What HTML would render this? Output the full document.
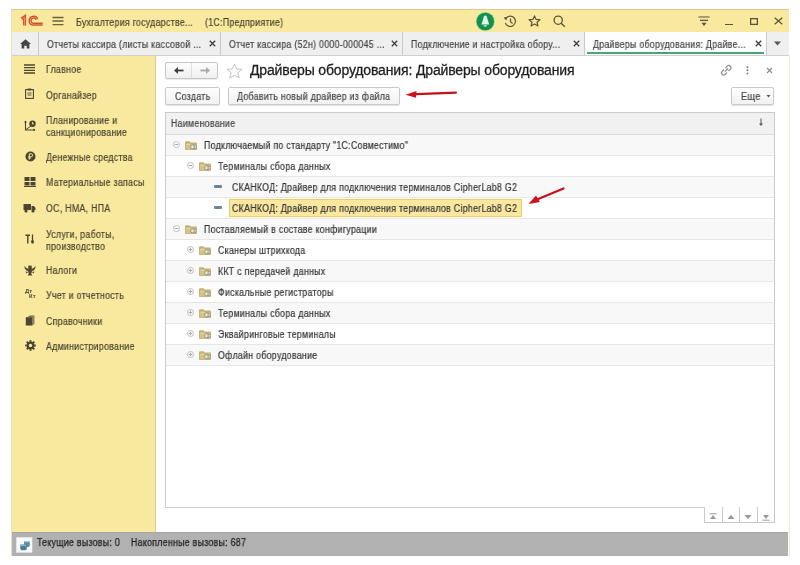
<!DOCTYPE html>
<html><head><meta charset="utf-8">
<style>
*{box-sizing:border-box;margin:0;padding:0}
html,body{width:800px;height:565px;overflow:hidden;background:#fff;font-family:"Liberation Sans",sans-serif;color:#333;position:relative}
.r{position:absolute}
.t{position:absolute;white-space:nowrap;will-change:transform;-webkit-text-stroke:0.2px currentColor}
</style></head><body>
<div class="r" style="left:11px;top:9px;width:778px;height:547px;background:#fff"></div>
<div class="r" style="left:11px;top:9px;width:778px;height:1.5px;background:#d4cb9b"></div>
<div class="r" style="left:11px;top:10px;width:778px;height:22px;background:#f9e99e"></div>
<svg class="r" style="left:18px;top:13px" width="28" height="16" viewBox="0 0 28 16"><g fill="none" stroke-linecap="butt"><path d="M3.6 5.9 L6.6 3.9 V12.6" stroke="#cf5529" stroke-width="3.1"/><path d="M4.4 5.7 L6.6 4.4 V12.3" stroke="#f2a47e" stroke-width="0.8"/><path d="M19.7 6.2 A4.4 4.4 0 1 0 15.6 12.1 H24.6" stroke="#cf5529" stroke-width="1.5"/><path d="M18.1 6.8 A2.6 2.6 0 1 0 15.6 10.3 H24.6" stroke="#cf5529" stroke-width="1.4"/></g></svg>
<svg class="r" style="left:52px;top:16px" width="12" height="10" viewBox="0 0 12 10"><path d="M0.5 1.5H11.5M0.5 5H11.5M0.5 8.6H11.5" stroke="#6a643c" stroke-width="1.3"/></svg>
<div class="t" style="left:76px;top:17.14px;font-size:10px;line-height:12px;letter-spacing:0.32px;color:#4a4530;transform:scaleX(0.88);transform-origin:0 0;">Бухгалтерия государстве...</div>
<div class="t" style="left:205px;top:17.14px;font-size:10px;line-height:12px;letter-spacing:0.32px;color:#4a4530;transform:scaleX(0.88);transform-origin:0 0;">(1С:Предприятие)</div>
<svg class="r" style="left:475px;top:10.5px" width="21" height="21" viewBox="0 0 21 21"><circle cx="10.3" cy="10.5" r="9.4" fill="#7ed79a"/><circle cx="10.3" cy="10.5" r="8.7" fill="#178f4a"/><path d="M10.3 4.6 C9.2 4.6 8.6 5.6 8.3 7.5 L6.4 13.4 H14.2 L12.3 7.5 C12 5.6 11.4 4.6 10.3 4.6Z" fill="#dcfbe8"/><rect x="8.7" y="14.3" width="3.2" height="1.1" fill="#dcfbe8"/></svg>
<svg class="r" style="left:503px;top:15px" width="14" height="13" viewBox="0 0 14 13"><g fill="none" stroke="#5a5436" stroke-width="1.2"><path d="M3 3.2 A5.2 5.2 0 1 1 2.3 8"/><path d="M7.5 3.5V6.8L9.6 8.4"/></g><path d="M0.6 2.4 L4.4 2 L3.3 5.6Z" fill="#5a5436"/></svg>
<svg class="r" style="left:528px;top:15px" width="13" height="12" viewBox="0 0 13 12"><path d="M6.5 0.9 L8.1 4.4 L11.9 4.7 L9 7.2 L9.9 11 L6.5 9 L3.1 11 L4 7.2 L1.1 4.7 L4.9 4.4Z" fill="none" stroke="#5a5436" stroke-width="1.2" stroke-linejoin="round"/></svg>
<svg class="r" style="left:553px;top:15px" width="13" height="13" viewBox="0 0 13 13"><g fill="none" stroke="#5a5436" stroke-width="1.3"><circle cx="5.2" cy="5.2" r="4.1"/><path d="M8.2 8.2 L11.8 11.8"/></g></svg>
<svg class="r" style="left:698px;top:16px" width="12" height="11" viewBox="0 0 12 11"><path d="M0.5 1H11.5M2 4.3H10" stroke="#5a5436" stroke-width="1.2"/><path d="M3.5 6.8H8.5L6 10Z" fill="#5a5436"/></svg>
<div class="r" style="left:725px;top:24px;width:8px;height:1.3px;background:#5a5436"></div>
<svg class="r" style="left:750px;top:18px" width="8" height="7" viewBox="0 0 8 7"><rect x="0.65" y="0.65" width="6.7" height="5.7" fill="none" stroke="#5a5436" stroke-width="1.3"/></svg>
<svg class="r" style="left:774px;top:17px" width="9" height="8" viewBox="0 0 9 8"><path d="M0.7 0.7L8.3 7.3M8.3 0.7L0.7 7.3" stroke="#5a5436" stroke-width="1.2"/></svg>
<div class="r" style="left:11px;top:32px;width:778px;height:23px;background:#efefef"></div>
<div class="r" style="left:11px;top:55px;width:778px;height:1px;background:#d0d0d0"></div>
<svg class="r" style="left:19.5px;top:38.5px" width="11" height="10" viewBox="0 0 11 10"><path d="M5.5 0.3 L11 5 H9.4 V9.6 H6.7 V6.8 H4.3 V9.6 H1.6 V5 H0Z" fill="#454545"/></svg>
<div class="r" style="left:38px;top:32px;width:1px;height:23px;background:#c9c9c9"></div>
<div class="t" style="left:47px;top:39.34px;font-size:10px;line-height:12px;letter-spacing:0.32px;color:#444;transform:scaleX(0.88);transform-origin:0 0;">Отчеты кассира (листы кассовой ...</div>
<svg class="r" style="left:209px;top:40px" width="7" height="7" viewBox="0 0 7 7"><path d="M0.8 0.8L6.2 6.2M6.2 0.8L0.8 6.2" stroke="#3a3a3a" stroke-width="1.25"/></svg>
<div class="r" style="left:220px;top:32px;width:1px;height:23px;background:#c9c9c9"></div>
<div class="t" style="left:229px;top:39.34px;font-size:10px;line-height:12px;letter-spacing:0.32px;color:#444;transform:scaleX(0.88);transform-origin:0 0;">Отчет кассира (52н) 0000-000045 ...</div>
<svg class="r" style="left:391px;top:40px" width="7" height="7" viewBox="0 0 7 7"><path d="M0.8 0.8L6.2 6.2M6.2 0.8L0.8 6.2" stroke="#3a3a3a" stroke-width="1.25"/></svg>
<div class="r" style="left:402px;top:32px;width:1px;height:23px;background:#c9c9c9"></div>
<div class="t" style="left:411px;top:39.34px;font-size:10px;line-height:12px;letter-spacing:0.32px;color:#444;transform:scaleX(0.88);transform-origin:0 0;">Подключение и настройка обору...</div>
<svg class="r" style="left:573px;top:40px" width="7" height="7" viewBox="0 0 7 7"><path d="M0.8 0.8L6.2 6.2M6.2 0.8L0.8 6.2" stroke="#3a3a3a" stroke-width="1.25"/></svg>
<div class="r" style="left:585px;top:32px;width:181px;height:23px;background:#fdfdfd"></div>
<div class="r" style="left:587px;top:52px;width:177px;height:2px;background:#4ba377"></div>
<div class="r" style="left:584px;top:32px;width:1px;height:23px;background:#c9c9c9"></div>
<div class="t" style="left:593px;top:39.34px;font-size:10px;line-height:12px;letter-spacing:0.32px;color:#444;transform:scaleX(0.88);transform-origin:0 0;">Драйверы оборудования: Драйве...</div>
<svg class="r" style="left:755px;top:40px" width="7" height="7" viewBox="0 0 7 7"><path d="M0.8 0.8L6.2 6.2M6.2 0.8L0.8 6.2" stroke="#3a3a3a" stroke-width="1.25"/></svg>
<div class="r" style="left:766px;top:32px;width:1px;height:23px;background:#c9c9c9"></div>
<svg class="r" style="left:774px;top:41px" width="7" height="5" viewBox="0 0 7 5"><path d="M0 0.5H7L3.5 4.5Z" fill="#555"/></svg>
<div class="r" style="left:11px;top:56px;width:144px;height:476px;background:#f9e99e"></div>
<div class="r" style="left:155px;top:56px;width:1px;height:476px;background:#d8cf9f"></div>
<div class="t" style="left:45.5px;top:64.13px;font-size:10px;line-height:12px;letter-spacing:0.32px;color:#48442f;transform:scaleX(0.88);transform-origin:0 0;">Главное</div>
<div class="t" style="left:45.5px;top:89.63px;font-size:10px;line-height:12px;letter-spacing:0.32px;color:#48442f;transform:scaleX(0.88);transform-origin:0 0;">Органайзер</div>
<div class="t" style="left:45.5px;top:114.63px;font-size:10px;line-height:12px;letter-spacing:0.32px;color:#48442f;transform:scaleX(0.88);transform-origin:0 0;">Планирование и</div>
<div class="t" style="left:45.5px;top:126.63px;font-size:10px;line-height:12px;letter-spacing:0.32px;color:#48442f;transform:scaleX(0.88);transform-origin:0 0;">санкционирование</div>
<div class="t" style="left:45.5px;top:152.13px;font-size:10px;line-height:12px;letter-spacing:0.32px;color:#48442f;transform:scaleX(0.88);transform-origin:0 0;">Денежные средства</div>
<div class="t" style="left:45.5px;top:177.44px;font-size:10px;line-height:12px;letter-spacing:0.32px;color:#48442f;transform:scaleX(0.88);transform-origin:0 0;">Материальные запасы</div>
<div class="t" style="left:45.5px;top:202.94px;font-size:10px;line-height:12px;letter-spacing:0.32px;color:#48442f;transform:scaleX(0.88);transform-origin:0 0;">ОС, НМА, НПА</div>
<div class="t" style="left:45.5px;top:228.63px;font-size:10px;line-height:12px;letter-spacing:0.32px;color:#48442f;transform:scaleX(0.88);transform-origin:0 0;">Услуги, работы,</div>
<div class="t" style="left:45.5px;top:240.63px;font-size:10px;line-height:12px;letter-spacing:0.32px;color:#48442f;transform:scaleX(0.88);transform-origin:0 0;">производство</div>
<div class="t" style="left:45.5px;top:265.14px;font-size:10px;line-height:12px;letter-spacing:0.32px;color:#48442f;transform:scaleX(0.88);transform-origin:0 0;">Налоги</div>
<div class="t" style="left:45.5px;top:290.14px;font-size:10px;line-height:12px;letter-spacing:0.32px;color:#48442f;transform:scaleX(0.88);transform-origin:0 0;">Учет и отчетность</div>
<div class="t" style="left:45.5px;top:315.64px;font-size:10px;line-height:12px;letter-spacing:0.32px;color:#48442f;transform:scaleX(0.88);transform-origin:0 0;">Справочники</div>
<div class="t" style="left:45.5px;top:341.14px;font-size:10px;line-height:12px;letter-spacing:0.32px;color:#48442f;transform:scaleX(0.88);transform-origin:0 0;">Администрирование</div>
<svg class="r" style="left:24px;top:64px" width="11" height="10" viewBox="0 0 11 10"><path d="M0 1H11M0 3.7H11M0 6.3H11M0 9H11" stroke="#4a4632" stroke-width="1.3"/></svg>
<svg class="r" style="left:25px;top:88px" width="9" height="11" viewBox="0 0 9 11"><rect x="0.6" y="1.6" width="7.8" height="8.8" fill="none" stroke="#4a4632" stroke-width="1.1"/><rect x="2.8" y="0.5" width="3.4" height="2" fill="#4a4632"/><path d="M2.5 5H6.5M2.5 7H6.5" stroke="#4a4632" stroke-width="0.9"/></svg>
<svg class="r" style="left:24px;top:120px" width="12" height="11" viewBox="0 0 12 11"><path d="M1.5 1 V10 H11" fill="none" stroke="#4a4632" stroke-width="1.1"/><path d="M0 2.5 L1.5 0.5 L3 2.5Z M9.5 8.5 L11.5 10 L9.5 11.5Z" fill="#4a4632"/><path d="M2 9.5 L7 6" stroke="#4a4632" stroke-width="1"/><circle cx="8.5" cy="3.8" r="3.2" fill="#4a4632"/><path d="M8.5 2 V4 H10" stroke="#f9e99e" stroke-width="0.9" fill="none"/></svg>
<svg class="r" style="left:25px;top:151px" width="11" height="11" viewBox="0 0 11 11"><circle cx="5.5" cy="5.5" r="5" fill="#4a4632"/><path d="M4.3 8.5 V2.8 H6.2 A1.5 1.5 0 0 1 6.2 5.8 H3.3 M3.3 7.1H6" fill="none" stroke="#f9e99e" stroke-width="1"/></svg>
<svg class="r" style="left:24px;top:177px" width="12" height="10" viewBox="0 0 12 10"><rect x="0.5" y="0" width="5" height="4" fill="#4a4632"/><rect x="6.5" y="0" width="5" height="4" fill="#4a4632"/><rect x="0.5" y="5" width="5" height="3.5" fill="#4a4632"/><rect x="6.5" y="5" width="5" height="3.5" fill="#4a4632"/><rect x="0" y="9" width="12" height="1" fill="#4a4632"/></svg>
<svg class="r" style="left:23px;top:203px" width="13" height="10" viewBox="0 0 13 10"><rect x="0.5" y="1" width="7.5" height="6" fill="#4a4632"/><path d="M8.5 3 H11 L12.5 5 V7 H8.5Z" fill="#4a4632"/><circle cx="3" cy="8" r="1.6" fill="#4a4632"/><circle cx="10" cy="8" r="1.6" fill="#4a4632"/></svg>
<svg class="r" style="left:25px;top:234px" width="10" height="10" viewBox="0 0 10 10"><path d="M0.5 1.2H5 M2.8 1.2V9.5" stroke="#4a4632" stroke-width="1.4"/><path d="M7.5 0.5V6" stroke="#4a4632" stroke-width="1.3"/><ellipse cx="7.5" cy="7.8" rx="1.4" ry="2" fill="#4a4632"/></svg>
<svg class="r" style="left:24px;top:264.5px" width="12" height="11" viewBox="0 0 12 11"><g fill="#4a4632"><path d="M0.5 0.8 C0.3 3.5 1.5 5.8 4.3 6.2 L4.6 3.8 C3 3.8 1.6 2.8 0.5 0.8Z"/><path d="M11.5 0.8 C11.7 3.5 10.5 5.8 7.7 6.2 L7.4 3.8 C9 3.8 10.4 2.8 11.5 0.8Z"/><path d="M4.2 1.3 L5 0.3 L6 1.1 L7 0.3 L7.8 1.3 L7.6 3 H4.4Z"/><path d="M4.2 3 H7.8 L7.9 7 L7.2 8.6 L8.2 10.6 H3.8 L4.8 8.6 L4.1 7Z"/><path d="M1.5 6.5 L4 7 L2.5 8.5Z M10.5 6.5 L8 7 L9.5 8.5Z"/></g></svg>
<div class="t" style="left:25px;top:288.5px;font-size:6px;line-height:5.5px;font-weight:bold;color:#4a4632;-webkit-text-stroke:0">Дт</div><div class="t" style="left:28.5px;top:294px;font-size:6px;line-height:5.5px;font-weight:bold;color:#4a4632;-webkit-text-stroke:0">Кт</div>
<svg class="r" style="left:25px;top:315px" width="10" height="11" viewBox="0 0 10 11"><path d="M2.5 2.2 L4.5 0.5 H9.5 L7.5 2.2Z" fill="#4a4632" opacity="0.75"/><rect x="0.8" y="2.2" width="6.7" height="8.3" fill="#4a4632"/><path d="M7.5 2.2 L9.5 0.5 V8.8 L7.5 10.5Z" fill="#4a4632" opacity="0.6"/></svg>
<svg class="r" style="left:24.5px;top:339.5px" width="11" height="11" viewBox="0 0 11 11"><g fill="#4a4632"><circle cx="5.5" cy="5.5" r="3.7"/><rect x="4.5" y="0.2" width="2" height="10.6" transform="rotate(0 5.5 5.5)"/><rect x="4.5" y="0.2" width="2" height="10.6" transform="rotate(45 5.5 5.5)"/><rect x="4.5" y="0.2" width="2" height="10.6" transform="rotate(90 5.5 5.5)"/><rect x="4.5" y="0.2" width="2" height="10.6" transform="rotate(135 5.5 5.5)"/></g><circle cx="5.5" cy="5.5" r="1.7" fill="#f9e99e"/></svg>
<div class="r" style="left:165px;top:62px;width:53px;height:17px;border:1px solid #c6c6c6;border-radius:2px;background:linear-gradient(#fdfdfd,#f0f0f0);box-shadow:0 1px 0 rgba(0,0,0,.08)"></div>
<div class="r" style="left:191px;top:63px;width:1px;height:15px;background:#dedede"></div>
<svg class="r" style="left:174px;top:67px" width="10" height="7" viewBox="0 0 10 7"><path d="M9.5 3.5H2.5" stroke="#404040" stroke-width="1.8"/><path d="M0 3.5 L4 0 V7Z" fill="#404040"/></svg>
<svg class="r" style="left:200px;top:67px" width="10" height="7" viewBox="0 0 10 7"><path d="M0.5 3.5H7.5" stroke="#a9a9a9" stroke-width="1.8"/><path d="M10 3.5 L6 0 V7Z" fill="#a9a9a9"/></svg>
<svg class="r" style="left:226px;top:63px" width="17" height="16" viewBox="0 0 17 16"><path d="M8.5 1 L10.6 6 L16 6.3 L11.9 9.8 L13.2 15 L8.5 12.2 L3.8 15 L5.1 9.8 L1 6.3 L6.4 6Z" fill="none" stroke="#c3c3c3" stroke-width="1" stroke-linejoin="round"/></svg>
<div class="t" style="left:250px;top:61.65px;font-size:14px;line-height:17px;letter-spacing:-0.15px;color:#1f1f1f;-webkit-text-stroke:0.3px #1f1f1f">Драйверы оборудования: Драйверы оборудования</div>
<svg class="r" style="left:720px;top:64px" width="13" height="12" viewBox="0 0 13 12"><g fill="none" stroke="#8a8a8a" stroke-width="1.2"><path d="M5.5 4 L7.3 2.2 A2.1 2.1 0 0 1 10.3 5.2 L8.5 7"/><path d="M7 8.5 L5.2 10.3 A2.1 2.1 0 0 1 2.2 7.3 L4 5.5"/><path d="M4.8 7.7 L8 4.5"/></g></svg>
<svg class="r" style="left:746px;top:66px" width="3" height="9" viewBox="0 0 3 9"><g fill="#7a7a7a"><circle cx="1.5" cy="1.2" r="1"/><circle cx="1.5" cy="4.3" r="1"/><circle cx="1.5" cy="7.4" r="1"/></g></svg>
<svg class="r" style="left:766px;top:67px" width="7" height="7" viewBox="0 0 7 7"><path d="M1 1L6 6M6 1L1 6" stroke="#8a8a8a" stroke-width="1.1"/></svg>
<div class="r" style="left:165px;top:87px;width:55px;height:18px;border:1px solid #c9c9c9;border-radius:2px;background:linear-gradient(#fefefe,#f1f1f1);box-shadow:0 1px 1px rgba(0,0,0,.12)"></div>
<div class="t" style="left:175px;top:91.13px;font-size:10px;line-height:12px;letter-spacing:0.32px;color:#444;transform:scaleX(0.88);transform-origin:0 0;">Создать</div>
<div class="r" style="left:228px;top:87px;width:172px;height:18px;border:1px solid #c9c9c9;border-radius:2px;background:linear-gradient(#fefefe,#f1f1f1);box-shadow:0 1px 1px rgba(0,0,0,.12)"></div>
<div class="t" style="left:237px;top:91.13px;font-size:10px;line-height:12px;letter-spacing:0.32px;color:#444;transform:scaleX(0.88);transform-origin:0 0;">Добавить новый драйвер из файла</div>
<div class="r" style="left:731px;top:87px;width:43px;height:18px;border:1px solid #c9c9c9;border-radius:2px;background:linear-gradient(#fefefe,#f1f1f1);box-shadow:0 1px 1px rgba(0,0,0,.12)"></div>
<div class="t" style="left:740.5px;top:91.13px;font-size:10px;line-height:12px;letter-spacing:0.32px;color:#444;transform:scaleX(0.92);transform-origin:0 0;">Еще</div>
<svg class="r" style="left:765.5px;top:95px" width="5" height="3" viewBox="0 0 5 3"><path d="M0.5 0H4.5L2.5 2.5Z" fill="#555"/></svg>
<svg class="r" style="left:404px;top:88px" width="54" height="12" viewBox="0 0 54 12"><path d="M12 6.2 L52 4.6" stroke="#c2121a" stroke-width="2.2" stroke-linecap="round"/><path d="M1.5 6.8 L12.5 3 L12 9.8Z" fill="#d0101a"/></svg>
<div class="r" style="left:165px;top:112px;width:610px;height:396px;border:1px solid #cbcbcb;background:#fff"></div>
<div class="r" style="left:166px;top:113px;width:608px;height:22px;background:#f1f1f1;border-bottom:1px solid #dadada"></div>
<div class="t" style="left:171px;top:118.13px;font-size:10px;line-height:12px;letter-spacing:0.32px;color:#444;transform:scaleX(0.88);transform-origin:0 0;">Наименование</div>
<svg class="r" style="left:758px;top:118px" width="6" height="9" viewBox="0 0 6 9"><path d="M3 0.5V6" stroke="#555" stroke-width="1"/><path d="M1 5.5 H5 L3 8Z" fill="#555"/></svg>
<div class="r" style="left:166px;top:135px;width:608px;height:21px;background:#f8f8f8;border-bottom:1px solid #e6e6e6"></div>
<svg class="r" style="left:173px;top:141.3px" width="7" height="7" viewBox="0 0 7 7"><circle cx="3.5" cy="3.5" r="3" fill="#fff" stroke="#b8b8b8" stroke-width="0.9"/><path d="M1.7 3.5H5.3" stroke="#a0a0a0" stroke-width="0.9"/></svg>
<svg class="r" style="left:185px;top:140.5px" width="12" height="9" viewBox="0 0 12 9"><path d="M0 1.2 Q0 0.3 1 0.3 H4.6 L5.6 1.5 H11 Q12 1.5 12 2.5 V8.2 Q12 9 11 9 H1 Q0 9 0 8.2Z" fill="#c3b277"/><path d="M0.8 3 H7 V8.3 H0.8Z" fill="#d2c388"/><path d="M1.5 3.2 H5" stroke="#efe4b8" stroke-width="0.9"/><circle cx="7.6" cy="5.8" r="2" fill="#ebe7da" stroke="#8f8b78" stroke-width="0.8"/><circle cx="10.3" cy="5.8" r="1.4" fill="#dcd8cc" stroke="#8f8b78" stroke-width="0.7"/></svg>
<div class="t" style="left:204px;top:140.03px;font-size:10px;line-height:12px;letter-spacing:0.32px;color:#333;transform:scaleX(0.88);transform-origin:0 0;">Подключаемый по стандарту &quot;1С:Совместимо&quot;</div>
<div class="r" style="left:166px;top:156px;width:608px;height:21px;background:#fff;border-bottom:1px solid #e6e6e6"></div>
<svg class="r" style="left:187px;top:162.3px" width="7" height="7" viewBox="0 0 7 7"><circle cx="3.5" cy="3.5" r="3" fill="#fff" stroke="#b8b8b8" stroke-width="0.9"/><path d="M1.7 3.5H5.3" stroke="#a0a0a0" stroke-width="0.9"/></svg>
<svg class="r" style="left:199px;top:161.5px" width="12" height="9" viewBox="0 0 12 9"><path d="M0 1.2 Q0 0.3 1 0.3 H4.6 L5.6 1.5 H11 Q12 1.5 12 2.5 V8.2 Q12 9 11 9 H1 Q0 9 0 8.2Z" fill="#c3b277"/><path d="M0.8 3 H7 V8.3 H0.8Z" fill="#d2c388"/><path d="M1.5 3.2 H5" stroke="#efe4b8" stroke-width="0.9"/><circle cx="7.6" cy="5.8" r="2" fill="#ebe7da" stroke="#8f8b78" stroke-width="0.8"/><circle cx="10.3" cy="5.8" r="1.4" fill="#dcd8cc" stroke="#8f8b78" stroke-width="0.7"/></svg>
<div class="t" style="left:218px;top:161.03px;font-size:10px;line-height:12px;letter-spacing:0.32px;color:#333;transform:scaleX(0.88);transform-origin:0 0;">Терминалы сбора данных</div>
<div class="r" style="left:166px;top:177px;width:608px;height:21px;background:#f8f8f8;border-bottom:1px solid #e6e6e6"></div>
<div class="r" style="left:214px;top:185px;width:8px;height:3px;background:#6d8399;border-radius:1px"></div>
<div class="t" style="left:232px;top:182.03px;font-size:10px;line-height:12px;letter-spacing:0.32px;color:#333;transform:scaleX(0.88);transform-origin:0 0;">СКАНКОД: Драйвер для подключения терминалов CipherLab8 G2</div>
<div class="r" style="left:166px;top:198px;width:608px;height:21px;background:#fff;border-bottom:1px solid #e6e6e6"></div>
<div class="r" style="left:214px;top:206px;width:8px;height:3px;background:#6d8399;border-radius:1px"></div>
<div class="r" style="left:229px;top:198.5px;width:293px;height:18px;background:#fae7a0;border:1px solid #eccb62"></div>
<div class="t" style="left:232px;top:203.03px;font-size:10px;line-height:12px;letter-spacing:0.32px;color:#333;transform:scaleX(0.88);transform-origin:0 0;">СКАНКОД: Драйвер для подключения терминалов CipherLab8 G2</div>
<div class="r" style="left:166px;top:219px;width:608px;height:21px;background:#f8f8f8;border-bottom:1px solid #e6e6e6"></div>
<svg class="r" style="left:173px;top:225.3px" width="7" height="7" viewBox="0 0 7 7"><circle cx="3.5" cy="3.5" r="3" fill="#fff" stroke="#b8b8b8" stroke-width="0.9"/><path d="M1.7 3.5H5.3" stroke="#a0a0a0" stroke-width="0.9"/></svg>
<svg class="r" style="left:185px;top:224.5px" width="12" height="9" viewBox="0 0 12 9"><path d="M0 1.2 Q0 0.3 1 0.3 H4.6 L5.6 1.5 H11 Q12 1.5 12 2.5 V8.2 Q12 9 11 9 H1 Q0 9 0 8.2Z" fill="#c3b277"/><path d="M0.8 3 H7 V8.3 H0.8Z" fill="#d2c388"/><path d="M1.5 3.2 H5" stroke="#efe4b8" stroke-width="0.9"/><circle cx="7.6" cy="5.8" r="2" fill="#ebe7da" stroke="#8f8b78" stroke-width="0.8"/><circle cx="10.3" cy="5.8" r="1.4" fill="#dcd8cc" stroke="#8f8b78" stroke-width="0.7"/></svg>
<div class="t" style="left:204px;top:224.03px;font-size:10px;line-height:12px;letter-spacing:0.32px;color:#333;transform:scaleX(0.88);transform-origin:0 0;">Поставляемый в составе конфигурации</div>
<div class="r" style="left:166px;top:240px;width:608px;height:21px;background:#fff;border-bottom:1px solid #e6e6e6"></div>
<svg class="r" style="left:187px;top:246.3px" width="7" height="7" viewBox="0 0 7 7"><circle cx="3.5" cy="3.5" r="3" fill="#fff" stroke="#b8b8b8" stroke-width="0.9"/><path d="M1.7 3.5H5.3M3.5 1.7V5.3" stroke="#a0a0a0" stroke-width="0.9"/></svg>
<svg class="r" style="left:199px;top:245.5px" width="12" height="9" viewBox="0 0 12 9"><path d="M0 1.2 Q0 0.3 1 0.3 H4.6 L5.6 1.5 H11 Q12 1.5 12 2.5 V8.2 Q12 9 11 9 H1 Q0 9 0 8.2Z" fill="#c3b277"/><path d="M0.8 3 H7 V8.3 H0.8Z" fill="#d2c388"/><path d="M1.5 3.2 H5" stroke="#efe4b8" stroke-width="0.9"/><circle cx="7.6" cy="5.8" r="2" fill="#ebe7da" stroke="#8f8b78" stroke-width="0.8"/><circle cx="10.3" cy="5.8" r="1.4" fill="#dcd8cc" stroke="#8f8b78" stroke-width="0.7"/></svg>
<div class="t" style="left:218px;top:245.03px;font-size:10px;line-height:12px;letter-spacing:0.32px;color:#333;transform:scaleX(0.88);transform-origin:0 0;">Сканеры штрихкода</div>
<div class="r" style="left:166px;top:261px;width:608px;height:21px;background:#f8f8f8;border-bottom:1px solid #e6e6e6"></div>
<svg class="r" style="left:187px;top:267.3px" width="7" height="7" viewBox="0 0 7 7"><circle cx="3.5" cy="3.5" r="3" fill="#fff" stroke="#b8b8b8" stroke-width="0.9"/><path d="M1.7 3.5H5.3M3.5 1.7V5.3" stroke="#a0a0a0" stroke-width="0.9"/></svg>
<svg class="r" style="left:199px;top:266.5px" width="12" height="9" viewBox="0 0 12 9"><path d="M0 1.2 Q0 0.3 1 0.3 H4.6 L5.6 1.5 H11 Q12 1.5 12 2.5 V8.2 Q12 9 11 9 H1 Q0 9 0 8.2Z" fill="#c3b277"/><path d="M0.8 3 H7 V8.3 H0.8Z" fill="#d2c388"/><path d="M1.5 3.2 H5" stroke="#efe4b8" stroke-width="0.9"/><circle cx="7.6" cy="5.8" r="2" fill="#ebe7da" stroke="#8f8b78" stroke-width="0.8"/><circle cx="10.3" cy="5.8" r="1.4" fill="#dcd8cc" stroke="#8f8b78" stroke-width="0.7"/></svg>
<div class="t" style="left:218px;top:266.04px;font-size:10px;line-height:12px;letter-spacing:0.32px;color:#333;transform:scaleX(0.88);transform-origin:0 0;">ККТ с передачей данных</div>
<div class="r" style="left:166px;top:282px;width:608px;height:21px;background:#fff;border-bottom:1px solid #e6e6e6"></div>
<svg class="r" style="left:187px;top:288.3px" width="7" height="7" viewBox="0 0 7 7"><circle cx="3.5" cy="3.5" r="3" fill="#fff" stroke="#b8b8b8" stroke-width="0.9"/><path d="M1.7 3.5H5.3M3.5 1.7V5.3" stroke="#a0a0a0" stroke-width="0.9"/></svg>
<svg class="r" style="left:199px;top:287.5px" width="12" height="9" viewBox="0 0 12 9"><path d="M0 1.2 Q0 0.3 1 0.3 H4.6 L5.6 1.5 H11 Q12 1.5 12 2.5 V8.2 Q12 9 11 9 H1 Q0 9 0 8.2Z" fill="#c3b277"/><path d="M0.8 3 H7 V8.3 H0.8Z" fill="#d2c388"/><path d="M1.5 3.2 H5" stroke="#efe4b8" stroke-width="0.9"/><circle cx="7.6" cy="5.8" r="2" fill="#ebe7da" stroke="#8f8b78" stroke-width="0.8"/><circle cx="10.3" cy="5.8" r="1.4" fill="#dcd8cc" stroke="#8f8b78" stroke-width="0.7"/></svg>
<div class="t" style="left:218px;top:287.04px;font-size:10px;line-height:12px;letter-spacing:0.32px;color:#333;transform:scaleX(0.88);transform-origin:0 0;">Фискальные регистраторы</div>
<div class="r" style="left:166px;top:303px;width:608px;height:21px;background:#f8f8f8;border-bottom:1px solid #e6e6e6"></div>
<svg class="r" style="left:187px;top:309.3px" width="7" height="7" viewBox="0 0 7 7"><circle cx="3.5" cy="3.5" r="3" fill="#fff" stroke="#b8b8b8" stroke-width="0.9"/><path d="M1.7 3.5H5.3M3.5 1.7V5.3" stroke="#a0a0a0" stroke-width="0.9"/></svg>
<svg class="r" style="left:199px;top:308.5px" width="12" height="9" viewBox="0 0 12 9"><path d="M0 1.2 Q0 0.3 1 0.3 H4.6 L5.6 1.5 H11 Q12 1.5 12 2.5 V8.2 Q12 9 11 9 H1 Q0 9 0 8.2Z" fill="#c3b277"/><path d="M0.8 3 H7 V8.3 H0.8Z" fill="#d2c388"/><path d="M1.5 3.2 H5" stroke="#efe4b8" stroke-width="0.9"/><circle cx="7.6" cy="5.8" r="2" fill="#ebe7da" stroke="#8f8b78" stroke-width="0.8"/><circle cx="10.3" cy="5.8" r="1.4" fill="#dcd8cc" stroke="#8f8b78" stroke-width="0.7"/></svg>
<div class="t" style="left:218px;top:308.04px;font-size:10px;line-height:12px;letter-spacing:0.32px;color:#333;transform:scaleX(0.88);transform-origin:0 0;">Терминалы сбора данных</div>
<div class="r" style="left:166px;top:324px;width:608px;height:21px;background:#fff;border-bottom:1px solid #e6e6e6"></div>
<svg class="r" style="left:187px;top:330.3px" width="7" height="7" viewBox="0 0 7 7"><circle cx="3.5" cy="3.5" r="3" fill="#fff" stroke="#b8b8b8" stroke-width="0.9"/><path d="M1.7 3.5H5.3M3.5 1.7V5.3" stroke="#a0a0a0" stroke-width="0.9"/></svg>
<svg class="r" style="left:199px;top:329.5px" width="12" height="9" viewBox="0 0 12 9"><path d="M0 1.2 Q0 0.3 1 0.3 H4.6 L5.6 1.5 H11 Q12 1.5 12 2.5 V8.2 Q12 9 11 9 H1 Q0 9 0 8.2Z" fill="#c3b277"/><path d="M0.8 3 H7 V8.3 H0.8Z" fill="#d2c388"/><path d="M1.5 3.2 H5" stroke="#efe4b8" stroke-width="0.9"/><circle cx="7.6" cy="5.8" r="2" fill="#ebe7da" stroke="#8f8b78" stroke-width="0.8"/><circle cx="10.3" cy="5.8" r="1.4" fill="#dcd8cc" stroke="#8f8b78" stroke-width="0.7"/></svg>
<div class="t" style="left:218px;top:329.04px;font-size:10px;line-height:12px;letter-spacing:0.32px;color:#333;transform:scaleX(0.88);transform-origin:0 0;">Эквайринговые терминалы</div>
<div class="r" style="left:166px;top:345px;width:608px;height:21px;background:#f8f8f8;border-bottom:1px solid #e6e6e6"></div>
<svg class="r" style="left:187px;top:351.3px" width="7" height="7" viewBox="0 0 7 7"><circle cx="3.5" cy="3.5" r="3" fill="#fff" stroke="#b8b8b8" stroke-width="0.9"/><path d="M1.7 3.5H5.3M3.5 1.7V5.3" stroke="#a0a0a0" stroke-width="0.9"/></svg>
<svg class="r" style="left:199px;top:350.5px" width="12" height="9" viewBox="0 0 12 9"><path d="M0 1.2 Q0 0.3 1 0.3 H4.6 L5.6 1.5 H11 Q12 1.5 12 2.5 V8.2 Q12 9 11 9 H1 Q0 9 0 8.2Z" fill="#c3b277"/><path d="M0.8 3 H7 V8.3 H0.8Z" fill="#d2c388"/><path d="M1.5 3.2 H5" stroke="#efe4b8" stroke-width="0.9"/><circle cx="7.6" cy="5.8" r="2" fill="#ebe7da" stroke="#8f8b78" stroke-width="0.8"/><circle cx="10.3" cy="5.8" r="1.4" fill="#dcd8cc" stroke="#8f8b78" stroke-width="0.7"/></svg>
<div class="t" style="left:218px;top:350.04px;font-size:10px;line-height:12px;letter-spacing:0.32px;color:#333;transform:scaleX(0.88);transform-origin:0 0;">Офлайн оборудование</div>
<svg class="r" style="left:526px;top:186px" width="40" height="20" viewBox="0 0 40 20"><path d="M11 13.5 L37.5 2.5" stroke="#c2121a" stroke-width="2.2" stroke-linecap="round"/><path d="M2.5 18 L10 9.5 L14 16Z" fill="#d0101a"/></svg>
<div class="r" style="left:704px;top:507px;width:71px;height:16px;border:1px solid #c9c9c9;border-top:none;background:#fff"></div>
<div class="r" style="left:722px;top:507px;width:1px;height:16px;background:#c9c9c9"></div>
<div class="r" style="left:739px;top:507px;width:1px;height:16px;background:#c9c9c9"></div>
<div class="r" style="left:757px;top:507px;width:1px;height:16px;background:#c9c9c9"></div>
<svg class="r" style="left:708px;top:512.5px" width="10" height="8" viewBox="0 0 10 8"><path d="M1.5 0.8H8.5" stroke="#999" stroke-width="1"/><path d="M5 2 L8 6 H2Z" fill="#999"/><path d="M5 7 L8 3.5 H2Z" fill="#999" opacity="0"/></svg>
<svg class="r" style="left:726px;top:513.5px" width="10" height="6" viewBox="0 0 10 6"><path d="M5 0.8 L8.5 5 H1.5Z" fill="#999"/></svg>
<svg class="r" style="left:743px;top:513.5px" width="10" height="6" viewBox="0 0 10 6"><path d="M5 5.2 L8.5 1 H1.5Z" fill="#999"/></svg>
<svg class="r" style="left:761px;top:512.5px" width="10" height="8" viewBox="0 0 10 8"><path d="M1.5 7.2H8.5" stroke="#999" stroke-width="1"/><path d="M5 6 L8 2 H2Z" fill="#999"/></svg>
<div class="r" style="left:11px;top:532px;width:777px;height:24px;background:#b1b1b1"></div>
<div class="r" style="left:11px;top:532px;width:777px;height:1px;background:#a6a59e"></div>
<svg class="r" style="left:16px;top:536.5px" width="17" height="16" viewBox="0 0 17 16"><rect x="0.3" y="0.3" width="16" height="15.3" fill="#f7f9fa"/><path d="M8 4.5 H13.8 V8.5 L12.5 10 H8Z" fill="#5d88a6"/><path d="M8.5 5 H13.5" stroke="#9fc0d6" stroke-width="0.8"/><path d="M4.3 7.5 H10.8 V12 L9.5 13.2 H5.5 L4.3 12Z" fill="#4f7b9a"/><path d="M5 8.3 H10" stroke="#a9c8dc" stroke-width="0.9"/></svg>
<div class="t" style="left:37px;top:537.43px;font-size:10px;line-height:12px;letter-spacing:0.32px;color:#1e1e1e;transform:scaleX(0.88);transform-origin:0 0;-webkit-text-stroke:0.25px #1e1e1e">Текущие вызовы: 0</div>
<div class="t" style="left:130.5px;top:537.43px;font-size:10px;line-height:12px;letter-spacing:0.32px;color:#1e1e1e;transform:scaleX(0.88);transform-origin:0 0;-webkit-text-stroke:0.25px #1e1e1e">Накопленные вызовы: 687</div>
<div class="r" style="left:788.5px;top:56px;width:1px;height:500px;background:#efe9cc"></div>
<div class="r" style="left:11px;top:10px;width:1px;height:546px;background:#ece3b9"></div>
</body></html>
